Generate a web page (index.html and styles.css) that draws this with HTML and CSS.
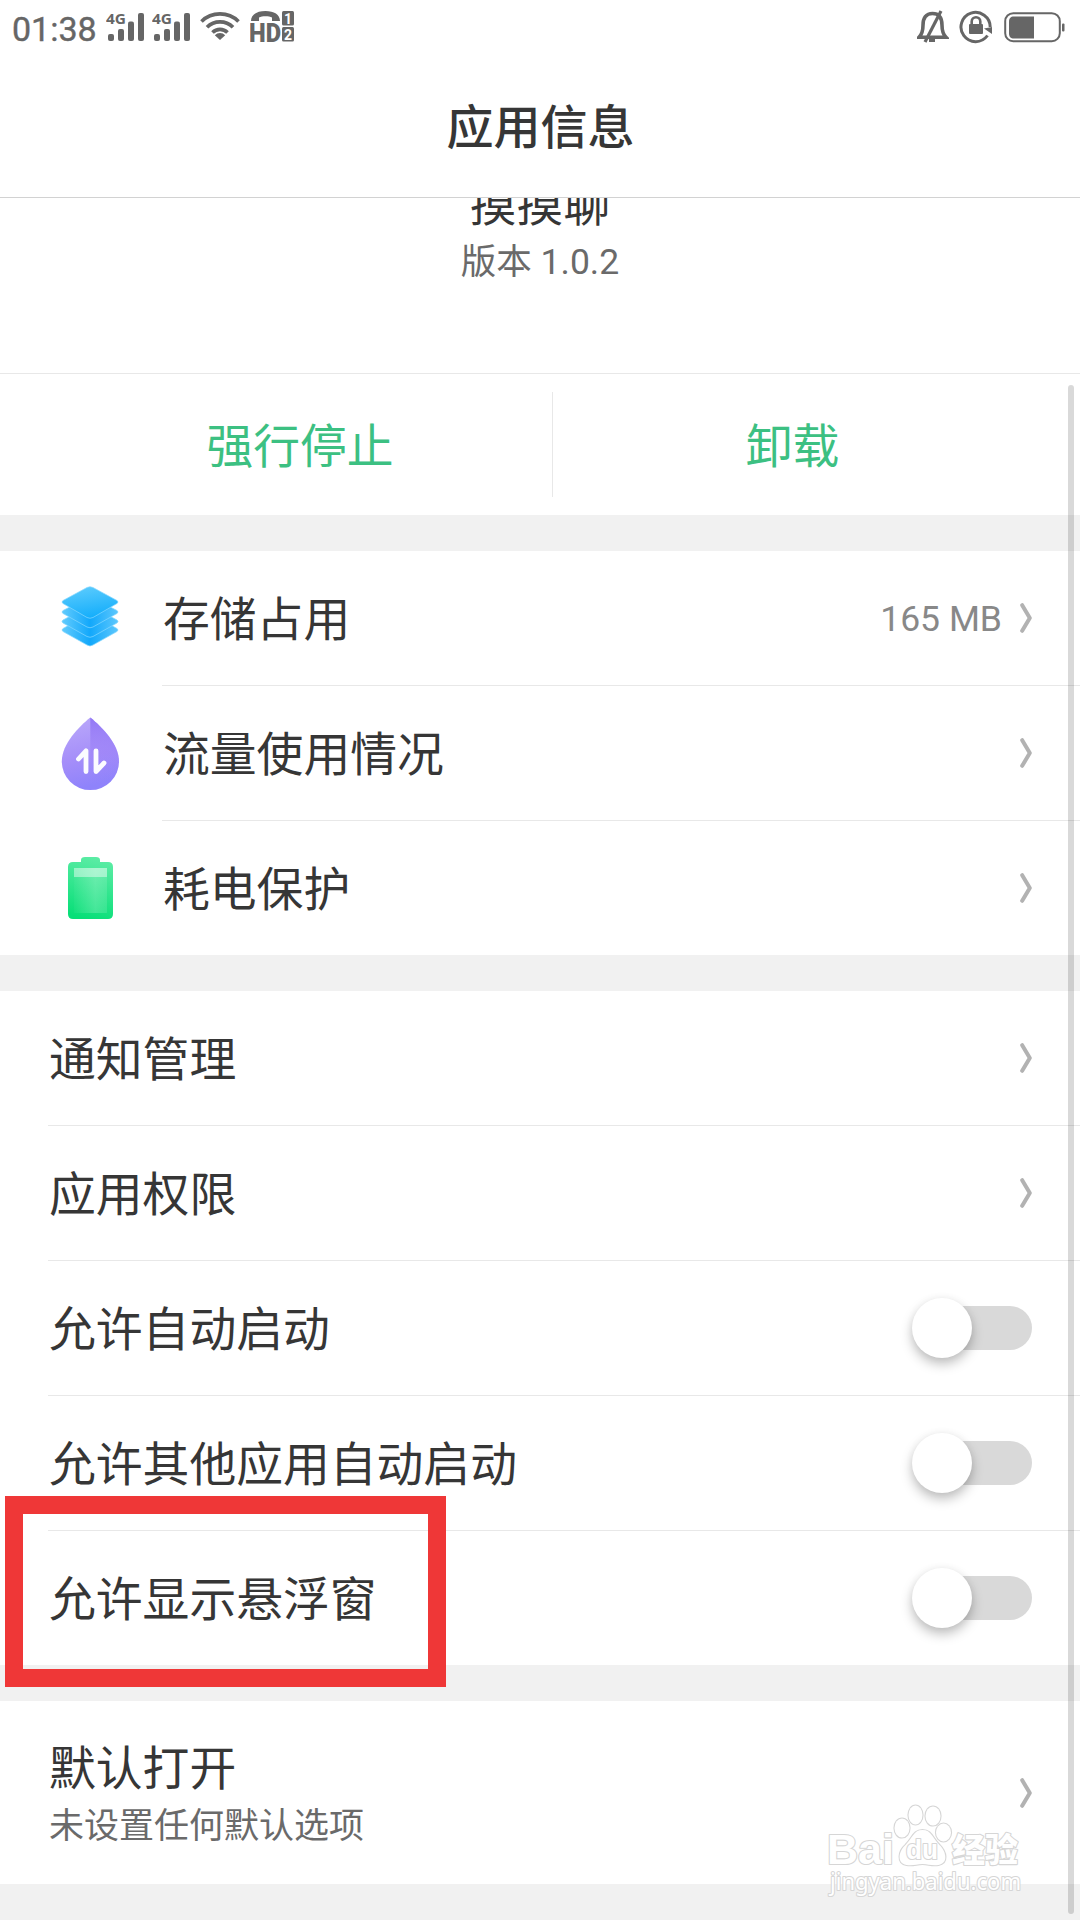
FILE: index.html
```html
<!DOCTYPE html>
<html lang="zh-CN">
<head>
<meta charset="utf-8">
<title>应用信息</title>
<link rel="stylesheet" href="styles.css">
</head>
<body>
<svg class="defs" width="0" height="0" aria-hidden="true">
  <defs>
    <symbol id="chevron" viewBox="0 0 12 30"><path d="M2.2 2.2 9.8 15 2.2 27.8" fill="none" stroke="#b2b2b2" stroke-width="4" stroke-linecap="round" stroke-linejoin="round"/></symbol>
    <symbol id="signal" viewBox="0 0 40 32">
      <text x="0" y="13" class="net" textLength="20" lengthAdjust="spacingAndGlyphs">4G</text>
      <rect x="2" y="23" width="6" height="7" rx="2"/><rect x="12" y="18" width="6" height="12" rx="2"/><rect x="22" y="10.500" width="6" height="19.500" rx="2"/><rect x="32" y="2" width="6" height="28" rx="2"/>
    </symbol>
  </defs>
</svg>
<div class="screen">
  <header class="header">
    <div class="status">
      <span class="clock">01:38</span>
      <svg class="signal" width="40" height="32"><use href="#signal"/></svg>
      <svg class="signal second" width="40" height="32"><use href="#signal"/></svg>
      <svg class="wifi" width="40" height="30" viewBox="0 0 40 30" fill="none" stroke="#666" stroke-width="3.700">
        <path d="M1.500 10.500a26.500 26.500 0 0 1 37 0M7 16.200a18.500 18.500 0 0 1 26 0M12.500 21.500a10.800 10.800 0 0 1 15 0"/><path d="M14.800 24.300a7 7 0 0 1 10.400 0L20 29z" fill="#666" stroke="none"/>
      </svg>
      <svg class="hd" width="46" height="36" viewBox="0 0 46 36">
        <path d="M1 11C1 4.500 7 1 15.500 1S30 4.500 30 11h-8V7.500c-3-1.600-10-1.600-13 0V11z"/>
        <text x="-1" y="31.500" class="hd-text" textLength="32" lengthAdjust="spacingAndGlyphs">HD</text>
        <rect x="32" y="1" width="12" height="14.500" rx="1.500"/><rect x="32" y="17" width="12" height="14.500" rx="1.500"/>
        <text x="34" y="13.500" class="sim">1</text><text x="34" y="29.500" class="sim">2</text>
      </svg>
      <svg class="bell" width="32" height="34" viewBox="0 0 32 34" fill="none" stroke="#666" stroke-width="3.600">
        <path d="M2 27.200c3-3 4-6 4-12C6 8 9 3.500 15.500 3.500S25 8 25 15.200c0 6 1 9 4 12z"/><path d="M24 1 8 32" stroke-width="3.200"/><path d="M12 30h6" stroke-width="4"/>
      </svg>
      <svg class="lock" width="34" height="34" viewBox="0 0 34 34">
        <path d="M28.500 25.500A14.600 14.600 0 1 1 31.200 17" fill="none" stroke="#666" stroke-width="3"/><path d="M25 18.500 33 17v7z"/>
        <rect x="10" y="14" width="14" height="10" rx="1"/><path d="M12.700 15v-3.500a4.300 4.300 0 0 1 8.600 0V15" fill="none" stroke="#666" stroke-width="2.600"/>
      </svg>
      <svg class="power" width="62" height="32" viewBox="0 0 62 32">
        <rect x="1.200" y="1.200" width="54.600" height="28" rx="8" fill="none" stroke="#666" stroke-width="2"/><path d="M10 4.500h20v22H10c-3.500 0-5-2-5-5v-12c0-3 1.500-5 5-5z"/><rect x="58" y="11.500" width="2.500" height="8" rx="1"/>
      </svg>
    </div>
    <h1 class="title">应用信息</h1>
  </header>

  <main class="content">
    <section class="app">
      <div class="app-name">摸摸聊</div>
      <div class="app-version">版本 1.0.2</div>
    </section>
    <section class="actions">
      <button class="action">强行停止</button>
      <span class="rule"></span>
      <button class="action">卸载</button>
    </section>

    <section class="group with-icons">
      <div class="row">
        <svg class="icon" width="60" height="76" viewBox="0 0 60 76">
          <defs>
            <linearGradient id="sheet" x1="0.300" y1="0" x2="0.600" y2="1"><stop offset="0" stop-color="#5bcbfd"/><stop offset="1" stop-color="#12adfb"/></linearGradient>
            <linearGradient id="under" x1="0" x2="1"><stop offset="0" stop-color="#62cbfd"/><stop offset=".5" stop-color="#12a8fb"/><stop offset="1" stop-color="#5cc7fd"/></linearGradient>
          </defs>
          <g stroke="#86d8ff" stroke-width=".7" transform="translate(0 -1)">
            <path d="M3 48.500Q1 50 3 51.500L27 65q3 2 6 0l24-13.500q2-1.500 0-3L33 35h-6z" fill="url(#under)"/>
            <path d="M3 40Q1 41.500 3 43l24 13.500q3 1.500 6 0L57 43q2-1.500 0-3L33 27h-6z" fill="url(#under)"/>
            <path d="M3 30.500Q1 32 3 33.500L27 47q3 1.500 6 0l24-13.500q2-1.500 0-3L33 18h-6z" fill="url(#under)"/>
            <path d="M3 20.500 27 7.500q3-1.500 6 0l24 13q2 1.500 0 3L33 37.500q-3 1.500-6 0L3 23.500q-2-1.500 0-3z" fill="url(#sheet)"/>
          </g>
        </svg>
        <div class="line"><span class="label">存储占用</span><span class="value">165 MB</span><svg class="chevron" width="12" height="30"><use href="#chevron"/></svg></div>
      </div>
      <div class="row">
        <svg class="icon" width="60" height="76" viewBox="0 0 60 76">
          <defs>
            <linearGradient id="drop" x1="0" y1="0" x2=".2" y2="1"><stop offset="0" stop-color="#bbaafa"/><stop offset=".6" stop-color="#a58ef9"/><stop offset="1" stop-color="#8f83fb"/></linearGradient>
            <linearGradient id="facet" x1="0" y1="0" x2="0" y2="1"><stop offset="0" stop-color="#9277f5"/><stop offset=".6" stop-color="#9c80f8" stop-opacity=".25"/><stop offset="1" stop-color="#8f83fb" stop-opacity="0"/></linearGradient>
          </defs>
          <path d="M30.300 1.500C42 11 59 28 59 45.500a28.600 28.600 0 0 1-57.200 0C1.800 28 18.500 11 30.300 1.500z" fill="url(#drop)"/>
          <path d="M30.300 1.500C42 11 59 28 59 45.500A28.600 28.600 0 0 1 30.300 74z" fill="url(#facet)"/>
          <path d="M18.500 43 26 34.800V55.500M36 34.800V55.500L44 47" fill="none" stroke="#fbfbff" stroke-width="4.800" stroke-linecap="round" stroke-linejoin="round"/>
        </svg>
        <div class="line"><span class="label">流量使用情况</span><svg class="chevron" width="12" height="30"><use href="#chevron"/></svg></div>
      </div>
      <div class="row">
        <svg class="icon" width="60" height="76" viewBox="0 0 60 76">
          <defs>
            <linearGradient id="cell" x1=".6" y1="0" x2=".4" y2="1"><stop offset="0" stop-color="#5ceca5"/><stop offset="1" stop-color="#08df78"/></linearGradient>
            <linearGradient id="glass" x1="0" x2="1"><stop offset="0" stop-color="#fff" stop-opacity=".03"/><stop offset=".65" stop-color="#fff" stop-opacity=".2"/><stop offset="1" stop-color="#fff" stop-opacity=".12"/></linearGradient>
          </defs>
          <path d="M21 12V10q0-3 4-3h11q4 0 4 3v2h8q5 0 5 5v47q0 5-5 5H13q-5 0-5-5V17q0-5 5-5z" fill="url(#cell)"/>
          <rect x="14" y="18" width="33" height="45" fill="url(#glass)"/><rect x="14" y="18" width="33" height="9" fill="#fff" opacity=".43"/>
        </svg>
        <div class="line"><span class="label">耗电保护</span><svg class="chevron" width="12" height="30"><use href="#chevron"/></svg></div>
      </div>
    </section>

    <section class="group">
      <div class="row"><div class="line"><span class="label">通知管理</span><svg class="chevron" width="12" height="30"><use href="#chevron"/></svg></div></div>
      <div class="row"><div class="line"><span class="label">应用权限</span><svg class="chevron" width="12" height="30"><use href="#chevron"/></svg></div></div>
      <div class="row"><div class="line"><span class="label">允许自动启动</span><span class="toggle"></span></div></div>
      <div class="row"><div class="line"><span class="label">允许其他应用自动启动</span><span class="toggle"></span></div></div>
      <div class="row marked"><div class="line"><span class="label">允许显示悬浮窗</span><span class="toggle"></span></div></div>
    </section>

    <section class="group">
      <div class="row tall"><div class="line">
        <div class="label stack"><span>默认打开</span><small class="hint">未设置任何默认选项</small></div>
        <svg class="chevron" width="12" height="30"><use href="#chevron"/></svg>
      </div></div>
    </section>
  </main>

  <span class="scrollbar"></span>
  <svg class="watermark" width="200" height="104" viewBox="0 0 200 104">
    <g class="outlined">
      <text x="1" y="64" class="wm-main" textLength="67" lengthAdjust="spacingAndGlyphs">Bai</text>
      <ellipse cx="76" cy="28" rx="7.500" ry="9.500"/><ellipse cx="89.500" cy="15" rx="7" ry="9.500"/><ellipse cx="107" cy="16" rx="7.500" ry="9.500"/><ellipse cx="117.500" cy="32.500" rx="7.500" ry="9"/>
      <path d="M96.500 30c-9 0-10 8-17 15-7 6-9 18 1 20 7 1 10-1 16-1s9 2 16 1c10-2 8-13 1-20-7-7-8-15-17-15z"/>
      <text x="80" y="59" class="wm-du" textLength="32" lengthAdjust="spacingAndGlyphs">du</text>
      <text x="126" y="62" class="wm-cn" textLength="66" lengthAdjust="spacingAndGlyphs">经验</text>
      <text x="4" y="90" class="wm-url" textLength="191" lengthAdjust="spacingAndGlyphs">jingyan.baidu.com</text>
    </g>
  </svg>
</div>
</body>
</html>
```
FILE: styles.css
```css
*, *::before, *::after { box-sizing: border-box; }

body {
  margin: 0;
  font-family: Roboto, "Noto Sans CJK SC", sans-serif;
  color: #363636;
}

.defs { display: block; }

.screen {
  position: relative;
  display: flex;
  flex-direction: column;
  width: 1080px;
  height: 1920px;
  overflow: hidden;
  background: #f1f1f1;
}

svg { flex: none; }

.header {
  flex: none;
  height: 198px;
  background: #fff;
  border-bottom: 1px solid #d2d2d2;
}

.status {
  display: flex;
  align-items: flex-start;
  height: 56px;
  padding: 10px 14px 0 12px;
  color: #666;
  fill: #666;
}

.clock {
  width: 94px;
  margin-top: -1px;
  font-size: 34px;
  line-height: 40px;
  -webkit-text-stroke: .4px;
}

.signal { margin-top: 1px; }
.second { margin-left: 6px; }
.wifi { margin: 1px 0 0 8px; }
.hd { margin-left: 10px; }
.bell { margin-left: auto; }
.lock { margin-left: 10px; }
.power { margin: 2px 0 0 11px; }

.net { font: 700 15px "Noto Sans", sans-serif; }
.hd-text { font: 900 25px Roboto, sans-serif; }
.sim { font: 700 14px Roboto, sans-serif; fill: #fff; }

.title {
  margin: 0;
  padding: 37px 0 0 1px;
  font-size: 47px;
  font-weight: 500;
  line-height: 70px;
  text-align: center;
}

.content {
  flex: none;
  height: 1722px;
  overflow: hidden;
}

.app {
  display: flex;
  flex-direction: column;
  height: 176px;
  background: #fff;
  border-bottom: 1px solid #e8e8e8;
  text-align: center;
}

.app-name {
  margin-top: -26px;
  font-size: 46.8px;
  line-height: 66px;
}

.app-version {
  color: #6a6a6a;
  font-size: 35.5px;
  line-height: 48px;
}

.actions {
  display: flex;
  align-items: center;
  height: 141px;
  margin-bottom: 36px;
  padding: 0 48px;
  background: #fff;
}

.action {
  flex: 1 1 0;
  padding: 4px 0 0;
  border: 0;
  background: none;
  color: #3cc082;
  font: inherit;
  font-size: 46.8px;
  line-height: 70px;
}

.action:first-child { flex: 0 0 504px; }

.rule {
  width: 1px;
  height: 105px;
  background: #e8e8e8;
}

.group {
  margin-bottom: 36px;
  background: #fff;
}

.row {
  display: flex;
  align-items: center;
  height: 135px;
  padding-left: 48px;
}

.row:last-child { height: 134px; }
.with-icons .row { padding-left: 60px; }
.icon { margin-right: 42px; }

.line {
  flex: 1;
  display: flex;
  align-items: center;
  height: 100%;
  padding-right: 48px;
  border-bottom: 1px solid #e8e8e8;
}

.row:last-child .line { border-bottom: 0; }

.label {
  margin-right: auto;
  padding: 3px 0 0 1px;
  font-size: 46.8px;
  line-height: 70px;
}

.value {
  margin-right: 18px;
  padding-top: 2px;
  color: #888;
  font-size: 35.5px;
}

.toggle {
  display: flex;
  align-items: center;
  width: 110px;
  height: 44px;
  border-radius: 22px;
  background: #d9d9d9;
}

.toggle::before {
  content: "";
  flex: none;
  width: 60px;
  height: 60px;
  margin-left: -10px;
  border-radius: 50%;
  background: #fff;
  box-shadow: 0 6px 12px rgba(0, 0, 0, .25), 0 0 8px rgba(0, 0, 0, .04);
}

.marked { position: relative; }

.marked::after {
  content: "";
  position: absolute;
  left: 5px;
  top: -35px;
  width: 441px;
  height: 191px;
  border: 18px solid #ef3737;
}

.row.tall { height: 183px; }

.stack {
  display: flex;
  flex-direction: column;
}

.stack span { line-height: 66px; }

.hint {
  color: #6a6a6a;
  font-size: 35px;
  line-height: 50px;
}

.scrollbar {
  position: absolute;
  left: 1068px;
  top: 385px;
  width: 6px;
  height: 1529px;
  border-radius: 3px;
  background: rgba(0, 0, 0, .15);
}

.watermark {
  position: absolute;
  left: 826px;
  top: 1800px;
}

.outlined {
  fill: #fff;
  stroke: #d6d6d6;
  stroke-width: 2.2px;
  stroke-linejoin: round;
  paint-order: stroke;
}

.wm-main { font: 700 42px "Liberation Sans", sans-serif; }
.wm-du { font: 700 27px "Liberation Sans", sans-serif; }
.wm-cn { font: 900 33px "Noto Sans CJK SC", sans-serif; }
.wm-url { font: 400 23px "Noto Sans", sans-serif; }
```
